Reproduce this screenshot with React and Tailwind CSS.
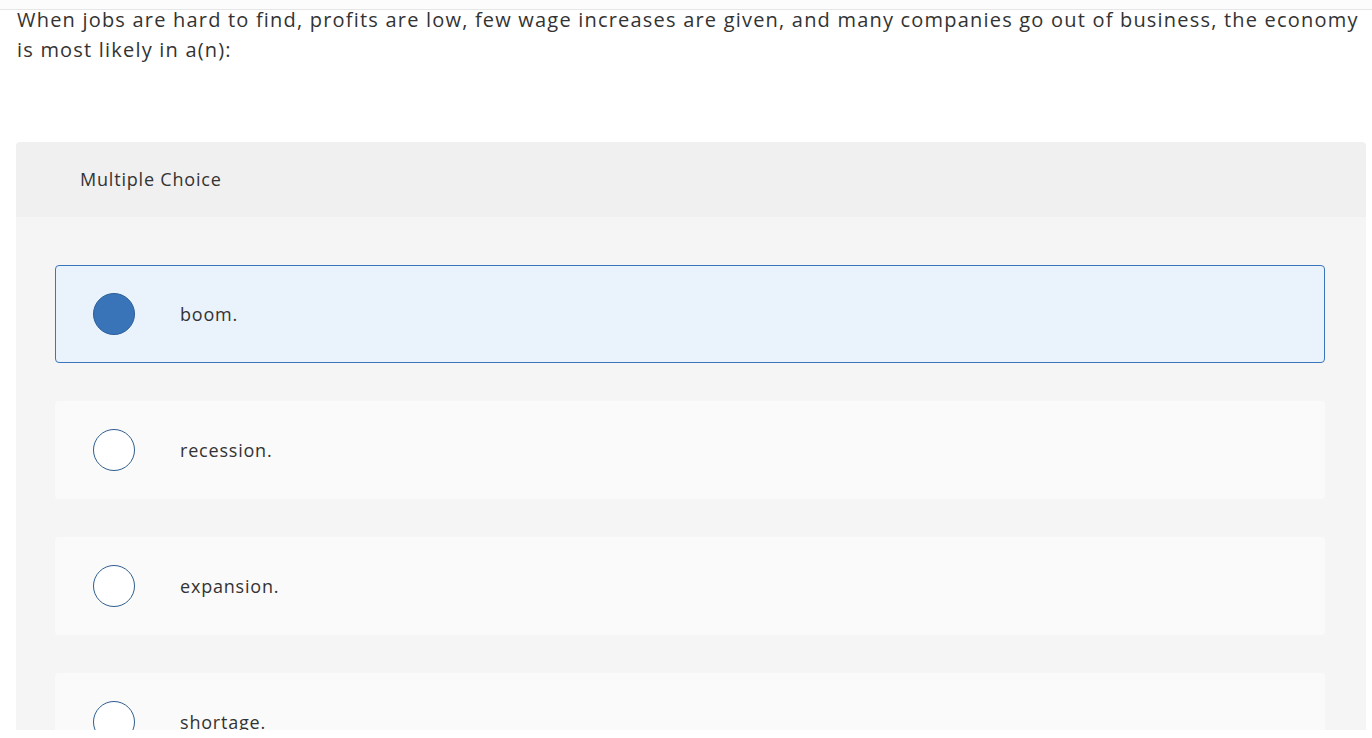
import React from "react";

const options = [
  { label: "boom.", selected: true },
  { label: "recession.", selected: false },
  { label: "expansion.", selected: false },
  { label: "shortage.", selected: false },
];

function Radio({ selected }) {
  return selected ? (
    <span className="block w-[42px] h-[42px] rounded-full bg-[#3a74b8] border border-[#2b5f99] shrink-0" />
  ) : (
    <span className="block w-[42px] h-[42px] rounded-full bg-white border-[1.5px] border-[#2f5e8e] shrink-0" />
  );
}

export default function App() {
  return (
    <div
      className="relative w-[1372px] h-[738px] bg-white overflow-hidden text-[#333333]"
      style={{ fontFamily: '"Open Sans", Arial, sans-serif' }}
    >
      <div className="absolute top-0 left-0 right-0 h-[10px] bg-[#fcfcfc] border-b border-[#e6e6e6] z-10" />
      <div className="h-[730px] overflow-hidden">
        <p className="pl-[17px] pr-[4px] pt-[5px] text-[20px] leading-[30px] tracking-[1.2px] text-[#333333]">
          When jobs are hard to find, profits are low, few wage increases are given, and many companies go out of business, the economy is most likely in a(n):
        </p>
        <div className="mt-[77px] ml-[16px] w-[1350px] rounded-t-[4px] overflow-hidden">
          <div className="h-[75px] bg-[#f0f0f0] flex items-center pl-[64px] text-[18px] tracking-[0.8px] text-[#333333]">
            Multiple Choice
          </div>
          <div className="bg-[#f5f5f5] pt-[48px] pb-[40px] px-[39px] flex flex-col gap-[38px]">
            {options.map((o) => (
              <div
                key={o.label}
                className={
                  o.selected
                    ? "h-[98px] rounded-[4px] border border-[#3a76bb] bg-[#eaf2fc] flex items-center pl-[37px] w-[1270px]"
                    : "h-[98px] rounded-[4px] border border-transparent bg-[#fafafa] flex items-center pl-[37px] w-[1270px]"
                }
              >
                <Radio selected={o.selected} />
                <span className="ml-[45px] text-[18px] tracking-[0.8px] text-[#333333]">{o.label}</span>
              </div>
            ))}
          </div>
        </div>
      </div>
    </div>
  );
}
